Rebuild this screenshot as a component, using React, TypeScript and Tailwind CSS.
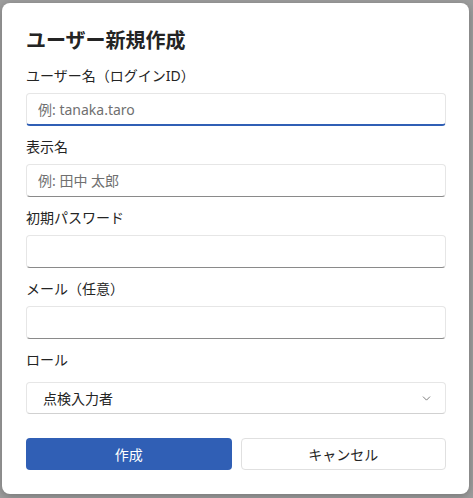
import { ChevronDown } from "lucide-react";

const font = { fontFamily: '"Segoe UI", "Noto Sans", "Noto Sans CJK JP", sans-serif' };

function Field({
  label,
  placeholder,
  focused,
}: {
  label: string;
  placeholder?: string;
  focused?: boolean;
}) {
  return (
    <div className="flex flex-col">
      <label className="text-[14px] leading-[20px] text-[#242424]">{label}</label>
      <input
        placeholder={placeholder}
        className={
          focused
            ? "mt-[7px] h-[33px] rounded-[4px] border border-[#e6e6e6] border-b-2 border-b-[#305fb5] bg-white px-[11px] text-[14px] text-[#242424] outline-none placeholder:text-[#707070]"
            : "mt-[7px] h-[33px] rounded-[4px] border border-[#e6e6e6] border-b-[#8a8a8a] bg-white px-[11px] text-[14px] text-[#242424] outline-none placeholder:text-[#707070]"
        }
      />
    </div>
  );
}

export default function App() {
  return (
    <div className="h-[498px] w-[473px] overflow-hidden bg-[#9d9d9d] pl-[2px] pt-[3px]" style={font}>
      <div className="flex h-[491px] w-[467px] flex-col rounded-[8px] bg-white pl-[24px] pr-[23px] pt-[24px] shadow-[0_2px_8px_rgba(0,0,0,0.25)]">
        <h2 className="text-[20px] font-semibold leading-[28px] text-[#242424]">ユーザー新規作成</h2>

        <div className="mt-[11px] flex flex-col gap-[11px]">
          <Field label="ユーザー名（ログインID）" placeholder="例: tanaka.taro" focused />
          <Field label="表示名" placeholder="例: 田中 太郎" />
          <Field label="初期パスワード" />
          <Field label="メール（任意）" />
          <div className="flex flex-col">
            <label className="text-[14px] leading-[20px] text-[#242424]">ロール</label>
            <div className="mt-[12px] flex h-[32px] items-center justify-between rounded-[4px] border border-[#e6e6e6] border-b-[#d1d1d1] bg-white pl-[16px] pr-[12px]">
              <span className="text-[14px] text-[#242424]">点検入力者</span>
              <ChevronDown size={13} strokeWidth={1.5} className="text-[#616161]" />
            </div>
          </div>
        </div>

        <div className="mt-[24px] grid grid-cols-2 gap-[9px]">
          <button className="h-[32px] rounded-[4px] bg-[#305fb5] text-[14px] text-white">作成</button>
          <button className="h-[32px] rounded-[4px] border border-[#e0e0e0] bg-white text-[14px] text-[#242424]">
            キャンセル
          </button>
        </div>
      </div>
    </div>
  );
}
